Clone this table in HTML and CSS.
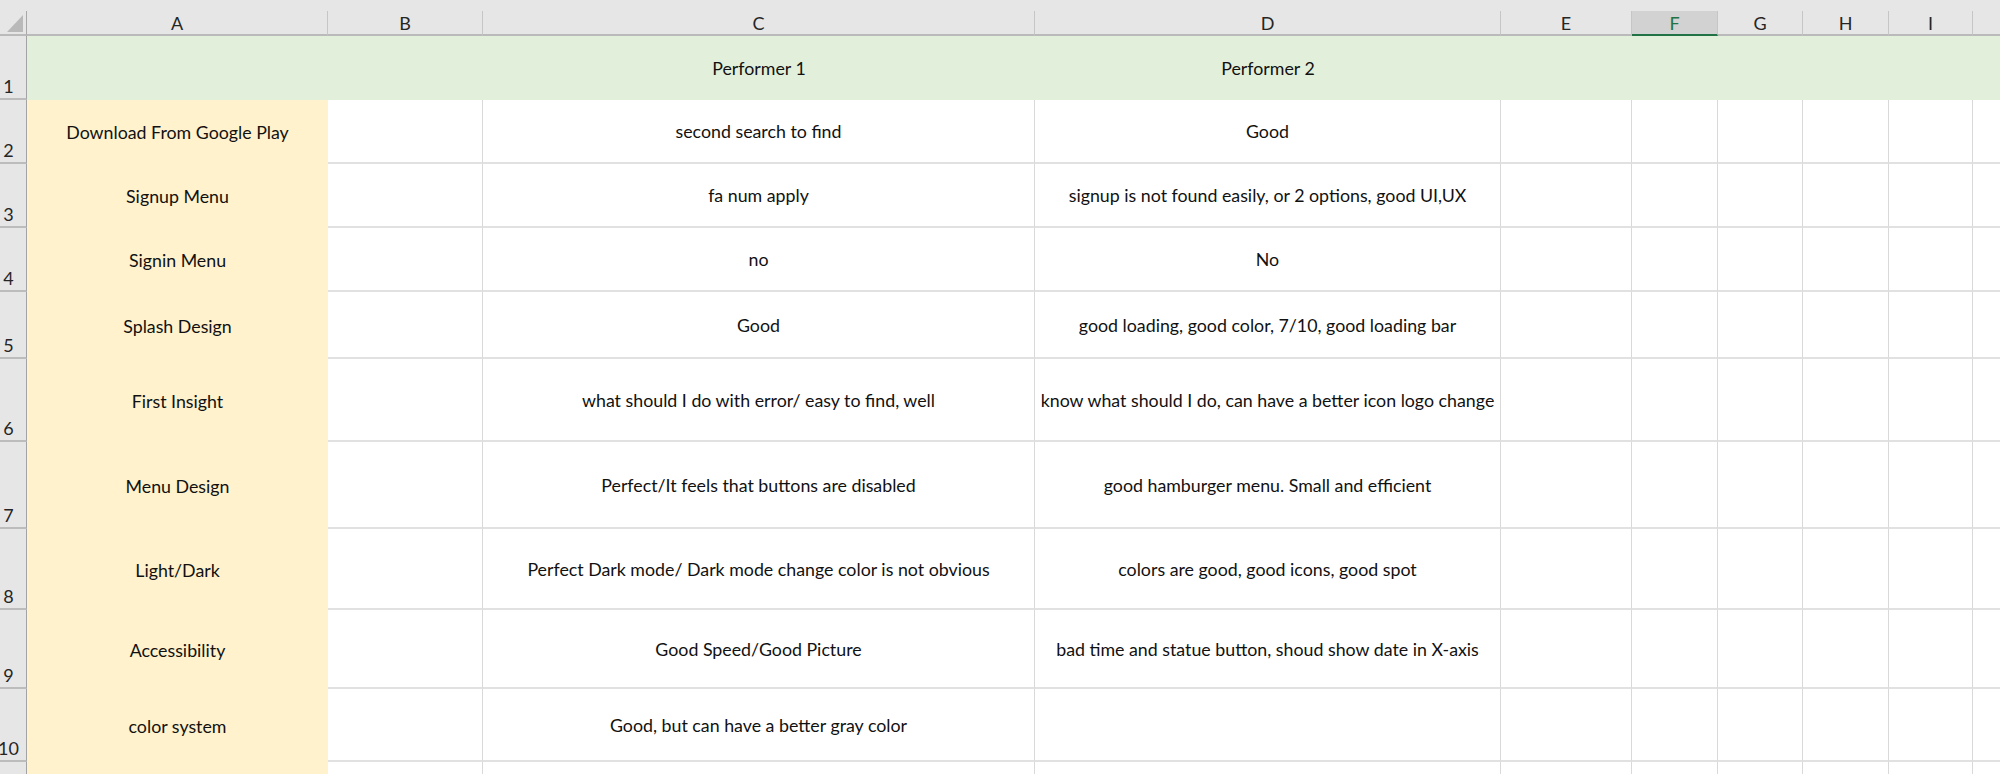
FILE: index.html
```html
<!DOCTYPE html>
<html>
<head>
<meta charset="utf-8">
<link rel="stylesheet" href="styles.css">
</head>
<body>
<div class="sheet">
  <div class="corner"><div class="corner-box"><svg class="select-all" width="16" height="17" viewBox="0 0 16 17"><polygon points="16,0 16,17 0,17" fill="#b9b9b9"/></svg></div></div>
  <div class="colhead"><div class="collabel">A</div></div>
  <div class="colhead"><div class="collabel">B</div></div>
  <div class="colhead"><div class="collabel">C</div></div>
  <div class="colhead"><div class="collabel">D</div></div>
  <div class="colhead"><div class="collabel">E</div></div>
  <div class="colhead"><div class="collabel selected">F</div></div>
  <div class="colhead"><div class="collabel">G</div></div>
  <div class="colhead"><div class="collabel">H</div></div>
  <div class="colhead"><div class="collabel">I</div></div>
  <div class="colhead"><div class="collabel"></div></div>

  <div class="rowhead">1</div>
  <div class="cell green"></div>
  <div class="cell green"></div>
  <div class="cell green">Performer 1</div>
  <div class="cell green">Performer 2</div>
  <div class="cell green"></div>
  <div class="cell green"></div>
  <div class="cell green"></div>
  <div class="cell green"></div>
  <div class="cell green"></div>
  <div class="cell green"></div>

  <div class="rowhead">2</div>
  <div class="cell yellow">Download From Google Play</div>
  <div class="cell"></div>
  <div class="cell">second search to find</div>
  <div class="cell">Good</div>
  <div class="cell"></div><div class="cell"></div><div class="cell"></div><div class="cell"></div><div class="cell"></div><div class="cell"></div>

  <div class="rowhead">3</div>
  <div class="cell yellow">Signup Menu</div>
  <div class="cell"></div>
  <div class="cell">fa num apply</div>
  <div class="cell">signup is not found easily, or 2 options, good UI,UX</div>
  <div class="cell"></div><div class="cell"></div><div class="cell"></div><div class="cell"></div><div class="cell"></div><div class="cell"></div>

  <div class="rowhead">4</div>
  <div class="cell yellow">Signin Menu</div>
  <div class="cell"></div>
  <div class="cell">no</div>
  <div class="cell">No</div>
  <div class="cell"></div><div class="cell"></div><div class="cell"></div><div class="cell"></div><div class="cell"></div><div class="cell"></div>

  <div class="rowhead">5</div>
  <div class="cell yellow">Splash Design</div>
  <div class="cell"></div>
  <div class="cell">Good</div>
  <div class="cell">good loading, good color, 7/10, good loading bar</div>
  <div class="cell"></div><div class="cell"></div><div class="cell"></div><div class="cell"></div><div class="cell"></div><div class="cell"></div>

  <div class="rowhead">6</div>
  <div class="cell yellow">First Insight</div>
  <div class="cell"></div>
  <div class="cell">what should I do with error/ easy to find, well</div>
  <div class="cell">know what should I do, can have a better icon logo change</div>
  <div class="cell"></div><div class="cell"></div><div class="cell"></div><div class="cell"></div><div class="cell"></div><div class="cell"></div>

  <div class="rowhead">7</div>
  <div class="cell yellow">Menu Design</div>
  <div class="cell"></div>
  <div class="cell">Perfect/It feels that buttons are disabled</div>
  <div class="cell">good hamburger menu. Small and efficient</div>
  <div class="cell"></div><div class="cell"></div><div class="cell"></div><div class="cell"></div><div class="cell"></div><div class="cell"></div>

  <div class="rowhead">8</div>
  <div class="cell yellow">Light/Dark</div>
  <div class="cell"></div>
  <div class="cell">Perfect Dark mode/ Dark mode change color is not obvious</div>
  <div class="cell">colors are good, good icons, good spot</div>
  <div class="cell"></div><div class="cell"></div><div class="cell"></div><div class="cell"></div><div class="cell"></div><div class="cell"></div>

  <div class="rowhead">9</div>
  <div class="cell yellow">Accessibility</div>
  <div class="cell"></div>
  <div class="cell">Good Speed/Good Picture</div>
  <div class="cell">bad time and statue button, shoud show date in X-axis</div>
  <div class="cell"></div><div class="cell"></div><div class="cell"></div><div class="cell"></div><div class="cell"></div><div class="cell"></div>

  <div class="rowhead">10</div>
  <div class="cell yellow">color system</div>
  <div class="cell"></div>
  <div class="cell">Good, but can have a better gray color</div>
  <div class="cell"></div>
  <div class="cell"></div><div class="cell"></div><div class="cell"></div><div class="cell"></div><div class="cell"></div><div class="cell"></div>

  <div class="rowhead">11</div>
  <div class="cell yellow"></div>
  <div class="cell"></div>
  <div class="cell"></div>
  <div class="cell"></div>
  <div class="cell"></div><div class="cell"></div><div class="cell"></div><div class="cell"></div><div class="cell"></div><div class="cell"></div>
</div>
</body>
</html>
```

FILE: styles.css
```css
html, body {
  margin: 0;
  padding: 0;
  background: #ffffff;
  overflow: hidden;
}

.sheet {
  display: grid;
  grid-template-columns: 27px 301px 155px 552px 466px 131px 86px 85px 86px 84px 90px;
  grid-template-rows: 36px 64px 64px 64px 64px 67px 83px 87px 81px 79px 73px 40px;
  width: 2057px;
  height: 774px;
  overflow: hidden;
  font-family: "Lato", "Liberation Sans", sans-serif;
  font-size: 17.8px;
  color: #111111;
}

.corner {
  background: #e6e6e6;
  padding-top: 11px;
  box-sizing: border-box;
}

.corner-box {
  height: 100%;
  box-sizing: border-box;
  border-right: 1px solid #a8a8a8;
  border-bottom: 2px solid #bababa;
  display: flex;
  align-items: flex-start;
  padding: 4px 0 0 7px;
}

.select-all {
  display: block;
}

.colhead {
  background: #e6e6e6;
  padding-top: 11px;
  box-sizing: border-box;
}

.collabel {
  height: 100%;
  box-sizing: border-box;
  border-right: 1px solid #c6c6c6;
  border-bottom: 2px solid #bababa;
  display: flex;
  align-items: center;
  justify-content: center;
  color: #262626;
  font-size: 18px;
  padding-top: 1px;
}

.collabel.selected {
  background: #d2d2d2;
  border-bottom: 2px solid #217346;
  color: #217346;
}

.rowhead {
  background: #e6e6e6;
  border-right: 1px solid #a3a3a3;
  border-bottom: 2px solid #bcbcbc;
  box-sizing: border-box;
  display: flex;
  align-items: flex-end;
  justify-content: center;
  padding: 0 9px 3px 0;
  color: #262626;
  font-size: 18px;
  line-height: 1;
}

.cell {
  background: #ffffff;
  border-right: 1px solid #d9d9d9;
  border-bottom: 2px solid #e1e1e1;
  box-sizing: border-box;
  display: flex;
  align-items: center;
  justify-content: center;
  white-space: nowrap;
  overflow: visible;
  min-width: 0;
}

.cell.green {
  background: #e2efda;
  border: none;
}

.cell.yellow {
  background: #fff2cc;
  border: none;
}
```
